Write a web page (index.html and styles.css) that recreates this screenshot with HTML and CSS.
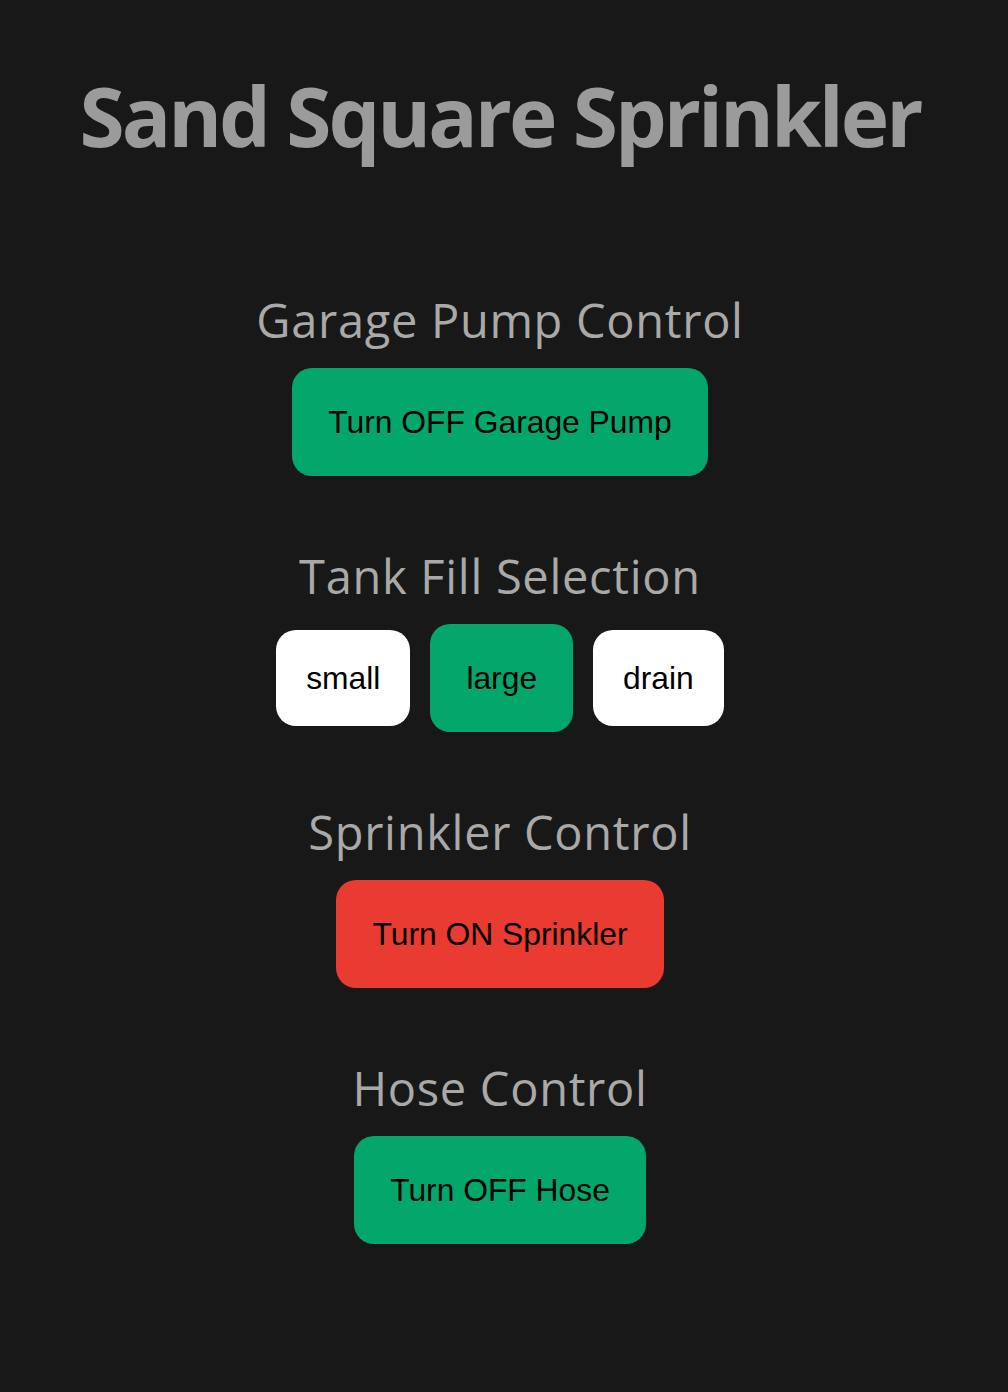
FILE: index.html
```html
<!DOCTYPE html>
<html lang="en">
<head>
<meta charset="utf-8">
<title>Sand Square Sprinkler</title>
<link rel="stylesheet" href="styles.css">
</head>
<body>
<main class="page">
  <h1 class="title">Sand Square Sprinkler</h1>

  <section class="section">
    <h2 class="heading">Garage Pump Control</h2>
    <button class="btn btn-on">Turn OFF Garage Pump</button>
  </section>

  <section class="section">
    <h2 class="heading">Tank Fill Selection</h2>
    <div class="choices">
      <button class="choice">small</button>
      <button class="choice choice-active">large</button>
      <button class="choice">drain</button>
    </div>
  </section>

  <section class="section">
    <h2 class="heading">Sprinkler Control</h2>
    <button class="btn btn-off">Turn ON Sprinkler</button>
  </section>

  <section class="section">
    <h2 class="heading">Hose Control</h2>
    <button class="btn btn-on">Turn OFF Hose</button>
  </section>
</main>
</body>
</html>
```

FILE: styles.css
```css
html, body {
  margin: 0;
  padding: 0;
  background: #181818;
}

.page {
  width: 1000px;
  display: flex;
  flex-direction: column;
  align-items: center;
  padding-top: 73px;
  font-family: "Open Sans", "Noto Sans", sans-serif;
}

.title {
  margin: 0 0 133px;
  font-size: 82px;
  line-height: 84px;
  font-weight: 700;
  color: #9b9b9b;
  letter-spacing: -3px;
}

.section {
  display: flex;
  flex-direction: column;
  align-items: center;
  margin-bottom: 70px;
}

.heading {
  margin: 0 0 18px;
  font-size: 47px;
  line-height: 60px;
  font-weight: 400;
  color: #a9a9a9;
  letter-spacing: 0.7px;
}

.btn,
.choice {
  font-family: "Liberation Sans", Arial, sans-serif;
  font-size: 31.8px;
  color: #000;
  border: none;
  border-radius: 20px;
  cursor: pointer;
  display: flex;
  align-items: center;
  justify-content: center;
}

.btn {
  height: 108px;
  padding: 0 36px;
}

.btn-on {
  background: #04a76b;
}

.btn-off {
  background: #e93b32;
}

.choices {
  display: flex;
  align-items: center;
  gap: 20px;
}

.choice {
  height: 96px;
  padding: 0 30px;
  background: #ffffff;
}

.choice-active {
  height: 108px;
  padding: 0 36px;
  background: #04a76b;
}
```
